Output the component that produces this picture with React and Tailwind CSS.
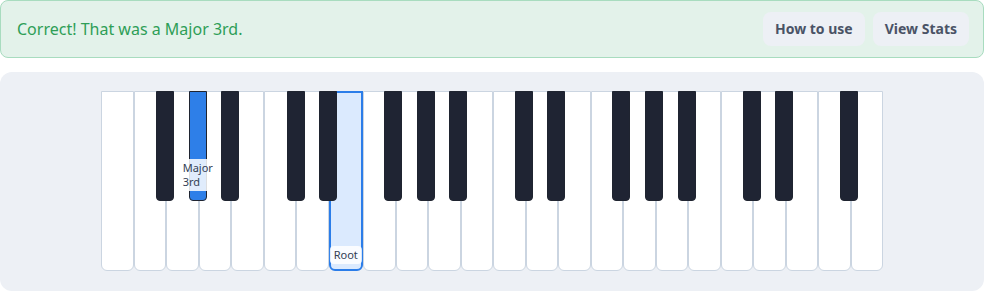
import React from 'react';

const WHITE_W = 782 / 24;
const whites = Array.from({ length: 24 }, (_, i) => i);
// boundaries (between white i-1 and i) that carry a black key
const blacks = [2, 3, 4, 6, 7, 9, 10, 11, 13, 14, 16, 17, 18, 20, 21, 23];
const ROOT = 7;
const TARGET = 3;

const KeyLabel = ({ children, className = '' }) => (
  <span
    className={`absolute left-1/2 -translate-x-1/2 rounded bg-white/85 px-1 py-0.5 text-[11px] leading-[14px] text-[#334155] ${className}`}
  >
    {children}
  </span>
);

const Keyboard = () => (
  <div className="relative flex h-[180px] w-[782px]">
    {whites.map((i) => {
      const isRoot = i === ROOT;
      return (
        <div
          key={i}
          className={`relative flex-1 rounded-b-md ${
            isRoot ? 'border-2 border-[#2b7de9] bg-[#dbeafe]' : 'border border-[#cbd5e1] bg-white'
          }`}
        >
          {isRoot && <KeyLabel className="bottom-[5px]">Root</KeyLabel>}
        </div>
      );
    })}
    {blacks.map((b) => {
      const isTarget = b === TARGET;
      return (
        <div
          key={b}
          className={`absolute top-0 h-[110px] w-[18px] rounded-b-[4px] border border-[#1f2430] ${
            isTarget ? 'bg-[#2e7fe8]' : 'bg-[#1f2433]'
          }`}
          style={{ left: b * WHITE_W - 10 }}
        >
          {isTarget && <KeyLabel className="bottom-[9px]">Major 3rd</KeyLabel>}
        </div>
      );
    })}
  </div>
);

export default function App() {
  return (
    <div className="w-[984px] bg-white font-['Noto_Sans',sans-serif]">
      <div className="flex items-center justify-between rounded-lg border border-[#a8dcbf] bg-[#e3f2ea] py-[11px] pl-4 pr-[14px]">
        <p className="text-base text-[#2e9e57]">Correct! That was a Major 3rd.</p>
        <div className="flex gap-2">
          <button className="h-[34px] rounded-lg bg-[#edf0f5] px-3 text-sm font-bold text-[#4a5366]">How to use</button>
          <button className="h-[34px] rounded-lg bg-[#edf0f5] px-3 text-sm font-bold text-[#4a5366]">View Stats</button>
        </div>
      </div>
      <div className="mt-[14px] flex justify-center rounded-xl bg-[#edf0f5] pb-5 pt-[19px]">
        <Keyboard />
      </div>
    </div>
  );
}
